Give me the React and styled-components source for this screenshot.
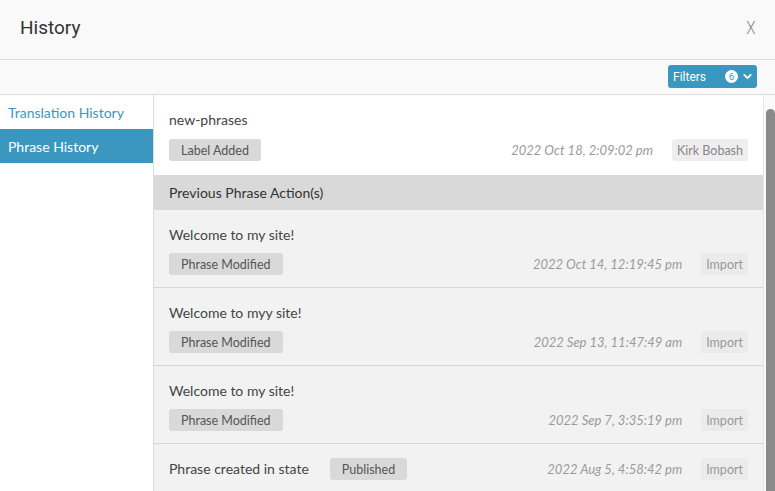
import React from "react";
import styled, { createGlobalStyle } from "styled-components";

const Global = createGlobalStyle`
  html, body { margin: 0; padding: 0; height: 491px; overflow: hidden; background: #fff; }
  body { font-family: Lato, "Open Sans", Arial, sans-serif; color: #444; }
  * { box-sizing: border-box; }
`;

const Page = styled.div`
  width: 775px;
  height: 491px;
  display: flex;
  flex-direction: column;
  overflow: hidden;
`;

const Header = styled.div`
  height: 60px;
  flex: none;
  background: #f9f9f9;
  border-bottom: 1px solid #dcdcdc;
  display: flex;
  align-items: center;
  justify-content: space-between;
  padding: 0 19px 0 20px;
`;

const Label = styled.span`
  display: inline-block;
  font-family: Roboto, "Liberation Sans", sans-serif;
  font-size: ${(p) => p.$size}px;
  font-weight: ${(p) => p.$weight || 400};
  color: ${(p) => p.$color};
  transform: scaleX(${(p) => p.$scale || 1});
  transform-origin: ${(p) => p.$origin || "left center"};
  white-space: nowrap;
`;

const Title = styled(Label)`
  margin-top: -5px;
`;

const Close = styled(Label)`
  margin-top: -5px;
`;

const FilterBar = styled.div`
  height: 35px;
  flex: none;
  background: #f9f9f9;
  border-bottom: 1px solid #dcdcdc;
  display: flex;
  align-items: center;
  justify-content: flex-end;
  padding: 0 18px 1px 0;
`;

const FilterButton = styled.div`
  width: 89px;
  height: 23px;
  border-radius: 3px;
  background: #3a97bf;
  display: flex;
  align-items: center;
  padding: 0 4px 0 5px;
`;

const FilterLabel = styled(Label)`
  flex: 1;
`;

const Badge = styled.span`
  width: 13px;
  height: 13px;
  border-radius: 50%;
  background: #fff;
  color: #3a97bf;
  font-family: Roboto, sans-serif;
  font-size: 9px;
  display: flex;
  align-items: center;
  justify-content: center;
  margin-right: 4px;
`;

const Body = styled.div`
  flex: 1;
  display: flex;
  min-height: 0;
`;

const Nav = styled.div`
  width: 154px;
  flex: none;
  border-right: 1px solid #dcdcdc;
  display: flex;
  flex-direction: column;
`;

const NavItem = styled.div`
  height: 34px;
  display: flex;
  align-items: center;
  padding-left: 8px;
  font-size: 14px;
  background: ${(p) => (p.$active ? "#3b97c0" : "transparent")};
  color: ${(p) => (p.$active ? "#fff" : "#3b97c0")};
`;

const Main = styled.div`
  flex: 1;
  display: flex;
  flex-direction: column;
  min-width: 0;
`;

const Item = styled.div`
  background: ${(p) => (p.$white ? "#fff" : "#f2f2f2")};
  border-bottom: 1px solid ${(p) => (p.$white ? "transparent" : "#d6d6d6")};
  padding: ${(p) => p.$pad || "15px 15px 12px"};
  display: flex;
  flex-direction: column;
  gap: ${(p) => p.$gap || 8}px;
  flex: none;
`;

const Phrase = styled.div`
  font-size: 14px;
  line-height: 20px;
  color: #444;
`;

const Row = styled.div`
  display: flex;
  align-items: center;
`;

const Tag = styled.span`
  height: 22px;
  border-radius: 3px;
  padding: 0 ${(p) => p.$px ?? 12}px;
  font-size: 12.5px;
  display: inline-flex;
  align-items: center;
  background: ${(p) => p.$bg || "#d9d9d9"};
  color: ${(p) => p.$color || "#555"};
  margin-left: ${(p) => p.$ml || 0}px;
`;

const DateText = styled.span`
  margin-left: auto;
  margin-right: 19px;
  font-size: 13px;
  font-style: italic;
  color: #9a9a9a;
`;

const SectionHeader = styled.div`
  height: 35px;
  flex: none;
  background: #d9d9d9;
  display: flex;
  align-items: center;
  padding-left: 15px;
  font-size: 14px;
  color: #333;
`;

const ScrollTrack = styled.div`
  width: 12px;
  flex: none;
  background: #fafafa;
  border-left: 1px solid #e6e6e6;
  padding: 14px 0 0 2px;
`;

const Thumb = styled.div`
  width: 9px;
  height: 100%;
  border-radius: 5px 5px 0 0;
  background: #8a8a8a;
`;

const items = [
  { text: "Welcome to my site!", date: "2022 Oct 14, 12:19:45 pm" },
  { text: "Welcome to myy site!", date: "2022 Sep 13, 11:47:49 am" },
  { text: "Welcome to my site!", date: "2022 Sep 7, 3:35:19 pm" },
];

export default function App() {
  return (
    <Page>
      <Global />
      <Header>
        <Title $size={19} $color="#333">History</Title>
        <Close $size={19} $color="#888" $scale={0.8} $weight={300} $origin="right center">X</Close>
      </Header>
      <FilterBar>
        <FilterButton>
          <FilterLabel $size={12} $color="#fff">Filters</FilterLabel>
          <Badge>6</Badge>
          <svg width="11" height="11" viewBox="0 0 12 12">
            <path d="M2.5 4.2 L6 7.7 L9.5 4.2" stroke="#fff" strokeWidth="2" fill="none" strokeLinecap="round" strokeLinejoin="round" />
          </svg>
        </FilterButton>
      </FilterBar>
      <Body>
        <Nav>
          <NavItem>Translation History</NavItem>
          <NavItem $active>Phrase History</NavItem>
        </Nav>
        <Main>
          <Item $white $pad="15px 15px 13px" $gap={9}>
            <Phrase>new-phrases</Phrase>
            <Row>
              <Tag>Label Added</Tag>
              <DateText>2022 Oct 18, 2:09:02 pm</DateText>
              <Tag $bg="#eeeeee" $color="#888" $px={5}>Kirk Bobash</Tag>
            </Row>
          </Item>
          <SectionHeader>Previous Phrase Action(s)</SectionHeader>
          {items.map((it, i) => (
            <Item key={i}>
              <Phrase>{it.text}</Phrase>
              <Row>
                <Tag>Phrase Modified</Tag>
                <DateText>{it.date}</DateText>
                <Tag $bg="#ebebeb" $color="#999" $px={5}>Import</Tag>
              </Row>
            </Item>
          ))}
          <Item $pad="14px 15px 13px">
            <Row>
              <Phrase>Phrase created in state</Phrase>
              <Tag $ml={21}>Published</Tag>
              <DateText>2022 Aug 5, 4:58:42 pm</DateText>
              <Tag $bg="#ebebeb" $color="#999" $px={5}>Import</Tag>
            </Row>
          </Item>
        </Main>
        <ScrollTrack>
          <Thumb />
        </ScrollTrack>
      </Body>
    </Page>
  );
}
